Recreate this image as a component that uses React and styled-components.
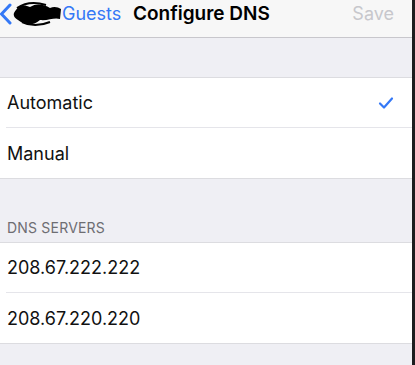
import React from "react";
import styled, { createGlobalStyle } from "styled-components";

const GlobalStyle = createGlobalStyle`
  html, body {
    margin: 0;
    padding: 0;
    background: #efeff4;
  }
  body {
    font-family: Inter, "Liberation Sans", sans-serif;
    -webkit-font-smoothing: antialiased;
  }
`;

const Screen = styled.div`
  width: 415px;
  height: 365px;
  display: flex;
  overflow: hidden;
`;

const Content = styled.div`
  flex: 1;
  display: flex;
  flex-direction: column;
  background: #efeff4;
`;

const Edge = styled.div`
  width: 3px;
  background: #1d1d1f;
`;

const NavBar = styled.header`
  height: 38px;
  box-sizing: border-box;
  display: flex;
  align-items: center;
  padding: 0 18px 10px 0;
  background: #f7f7f7;
  border-bottom: 1px solid #c8c7cc;
`;

const Back = styled.div`
  display: flex;
  align-items: center;
  color: #3478f6;
  font-size: 18px;
  width: 133px;
  svg {
    flex: none;
  }
`;

const Title = styled.div`
  flex: 1;
  font-size: 19px;
  font-weight: 600;
  color: #000;
`;

const SaveButton = styled.div`
  font-size: 18px;
  color: #c7c7cc;
`;

const Spacer = styled.div`
  height: ${(p) => p.h}px;
`;

const SectionHeader = styled.div`
  height: 63px;
  box-sizing: border-box;
  display: flex;
  align-items: flex-end;
  padding: 0 0 6px 7px;
  font-size: 14px;
  color: #6d6d72;
  letter-spacing: 0.2px;
`;

const Group = styled.div`
  background: #fff;
  border-top: 1px solid #dcdce0;
  border-bottom: 1px solid #dcdce0;
`;

const Row = styled.div`
  height: ${(p) => p.h || 50}px;
  display: flex;
  align-items: center;
  padding-left: 7px;
  padding-right: 18px;
  font-size: 18px;
  color: #111;
  box-sizing: border-box;
`;

const RowText = styled.span`
  flex: 1;
`;

const Separator = styled.div`
  height: 1px;
  margin-left: 6px;
  background: #e5e5ea;
`;

const Chevron = () => (
  <svg width="12" height="24" viewBox="0 0 12 24">
    <path
      d="M10 3 L1.5 12 L10 21"
      fill="none"
      stroke="#3478f6"
      strokeWidth="3"
      strokeLinecap="round"
      strokeLinejoin="round"
    />
  </svg>
);

const Scribble = () => (
  <svg width="50" height="26" viewBox="0 0 50 26">
    <path
      d="M2 12 C6 4 12 3 18 6 C24 2 32 3 38 7 C42 5 46 6 49 8 L48 18 C42 16 36 20 28 19 C22 25 12 24 6 19 C3 17 1 15 2 12 Z"
      fill="#000"
    />
    <path
      d="M5 7 C14 1 24 1 34 4 M10 21 C18 25 28 25 38 21"
      fill="none"
      stroke="#000"
      strokeWidth="2"
    />
  </svg>
);

const Check = () => (
  <svg width="16" height="14" viewBox="0 0 16 14">
    <path
      d="M2 7.5 L6 11.5 L14 2.5"
      fill="none"
      stroke="#3478f6"
      strokeWidth="2.2"
      strokeLinecap="round"
      strokeLinejoin="round"
    />
  </svg>
);

const App = () => {
  const servers = ["208.67.222.222", "208.67.220.220"];
  return (
    <Screen>
      <GlobalStyle />
      <Content>
        <NavBar>
          <Back>
            <Chevron />
            <Scribble />
            <span>Guests</span>
          </Back>
          <Title>Configure DNS</Title>
          <SaveButton>Save</SaveButton>
        </NavBar>
        <Spacer h={39} />
        <Group>
          <Row h={49}>
            <RowText>Automatic</RowText>
            <Check />
          </Row>
          <Separator />
          <Row>
            <RowText>Manual</RowText>
          </Row>
        </Group>
        <SectionHeader>DNS SERVERS</SectionHeader>
        <Group>
          {servers.map((s, i) => (
            <React.Fragment key={s}>
              {i > 0 && <Separator />}
              <Row h={i === 0 ? 49 : 50}>
                <RowText>{s}</RowText>
              </Row>
            </React.Fragment>
          ))}
        </Group>
      </Content>
      <Edge />
    </Screen>
  );
};

export default App;
